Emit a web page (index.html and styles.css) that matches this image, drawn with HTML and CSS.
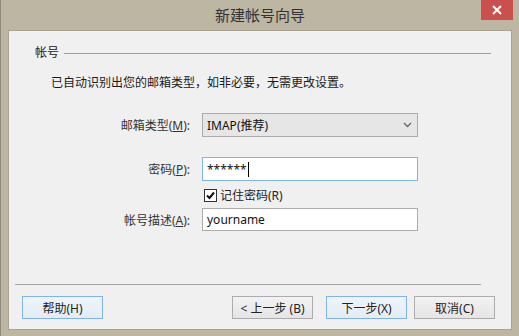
FILE: index.html
```html
<!DOCTYPE html>
<html lang="zh-CN">
<head>
  <meta charset="UTF-8" />
  <title>新建帐号向导</title>
  <link rel="stylesheet" href="styles.css">
</head>
<body>
  <div class="window">
    <div class="titlebar">
      <span class="title">新建帐号向导</span>
      <span class="close">
        <svg width="10" height="10" viewBox="0 0 10 10"><path d="M1 1 L9 9 M9 1 L1 9" stroke="#fff" stroke-width="2"/></svg>
      </span>
    </div>

    <div class="client">
      <div class="group-title"><span>帐号</span><div class="group-line"></div></div>
      <p class="hint">已自动识别出您的邮箱类型，如非必要，无需更改设置。</p>

      <div class="row row-type">
        <label class="label">邮箱类型(<u>M</u>):</label>
        <div class="select">
          <span>IMAP(推荐)</span>
          <svg width="9" height="6" viewBox="0 0 9 6"><path d="M1 1 L4.5 4.5 L8 1" fill="none" stroke="#666" stroke-width="1.3"/></svg>
        </div>
      </div>

      <div class="row row-pass">
        <label class="label">密码(<u>P</u>):</label>
        <div class="input focused">******<span class="caret"></span></div>
      </div>

      <div class="row row-check">
        <span class="label"></span>
        <div class="check">
          <svg width="13" height="13" viewBox="0 0 13 13"><rect x="0.5" y="0.5" width="12" height="12" fill="#fff" stroke="#333"/><path d="M3 6.5 L5.5 9 L10 3.5" fill="none" stroke="#111" stroke-width="2"/></svg>
          <span>记住密码(R)</span>
        </div>
      </div>

      <div class="row row-desc">
        <label class="label">帐号描述(<u>A</u>):</label>
        <div class="input">yourname</div>
      </div>

      <div class="footer">
        <div class="separator"></div>
        <div class="buttons">
          <button class="btn default">帮助(H)</button>
          <span class="spacer"></span>
          <button class="btn">&lt; 上一步 (B)</button>
          <button class="btn default next">下一步(X)</button>
          <button class="btn cancel">取消(C)</button>
        </div>
      </div>
    </div>
  </div>
</body>
</html>
```

FILE: styles.css
```css
body {
  margin: 0;
  background: #bdb6a2;
  font-family: "Noto Sans", "Noto Sans CJK SC", sans-serif;
  font-size: 12px;
  color: #1a1a1a;
}
.window {
  width: 519px;
  height: 336px;
  box-sizing: border-box;
  border-left: 1px solid #8f8a7c;
  display: flex;
  flex-direction: column;
}
.titlebar {
  height: 30px;
  position: relative;
  display: flex;
  justify-content: center;
  align-items: center;
}
.title {
  font-size: 15px;
  color: #333;
  line-height: 20px;
}
.close {
  position: absolute;
  top: 0;
  left: 480px;
  width: 32px;
  height: 20px;
  background: #c9504c;
  display: flex;
  align-items: center;
  justify-content: center;
}
.client {
  margin: 0 7px 0 7px;
  height: 300px;
  box-sizing: border-box;
  background: #f0f0f0;
  border: 1px solid #a9a392;
  display: flex;
  flex-direction: column;
}
.group-title {
  display: flex;
  align-items: center;
  margin: 14px 20px 0 26px;
  line-height: 16px;
}
.group-line {
  flex: 1;
  height: 1px;
  background: #a0a0a0;
  margin-left: 5px;
}
.hint {
  margin: 14px 0 0 42px;
  line-height: 16px;
}
.row {
  display: flex;
  align-items: center;
}
.label {
  width: 193px;
  box-sizing: border-box;
  padding-right: 12px;
  text-align: right;
  color: #333;
}
.row-type { margin-top: 22px; height: 24px; }
.row-pass { margin-top: 20px; height: 24px; }
.row-check { margin-top: 7px; height: 14px; }
.row-desc { margin-top: 6px; height: 23px; }
.select {
  width: 216px;
  height: 24px;
  box-sizing: border-box;
  border: 1px solid #acacac;
  background: #e6e6e6;
  display: flex;
  align-items: center;
  justify-content: space-between;
  padding: 0 5px 0 4px;
  color: #111;
}
.input {
  width: 216px;
  height: 100%;
  box-sizing: border-box;
  border: 1px solid #acacac;
  background: #fff;
  display: flex;
  align-items: center;
  padding-left: 4px;
  color: #111;
}
.input.focused {
  border-color: #7eb4ea;
}
.caret {
  display: inline-block;
  width: 1px;
  height: 15px;
  background: #000;
  margin-left: 1px;
}
.check {
  display: flex;
  align-items: center;
  gap: 3px;
  margin-left: 2px;
  color: #222;
}
.footer {
  margin-top: auto;
  padding-bottom: 10px;
}
.separator {
  height: 1px;
  background: #a0a0a0;
  margin: 0 30px 0 6px;
}
.buttons {
  display: flex;
  margin: 11px 16px 0 13px;
}
.spacer {
  flex: 1;
}
.btn {
  width: 81px;
  height: 23px;
  font: inherit;
  color: #222;
  border: 1px solid #acacac;
  background: linear-gradient(#f2f2f2, #e5e5e5);
  padding: 0;
}
.btn.default {
  border-color: #7eb4ea;
  background: linear-gradient(#eef4fa, #e3ecf5);
}
.next {
  margin-left: 13px;
}
.cancel {
  margin-left: 7px;
}
```
